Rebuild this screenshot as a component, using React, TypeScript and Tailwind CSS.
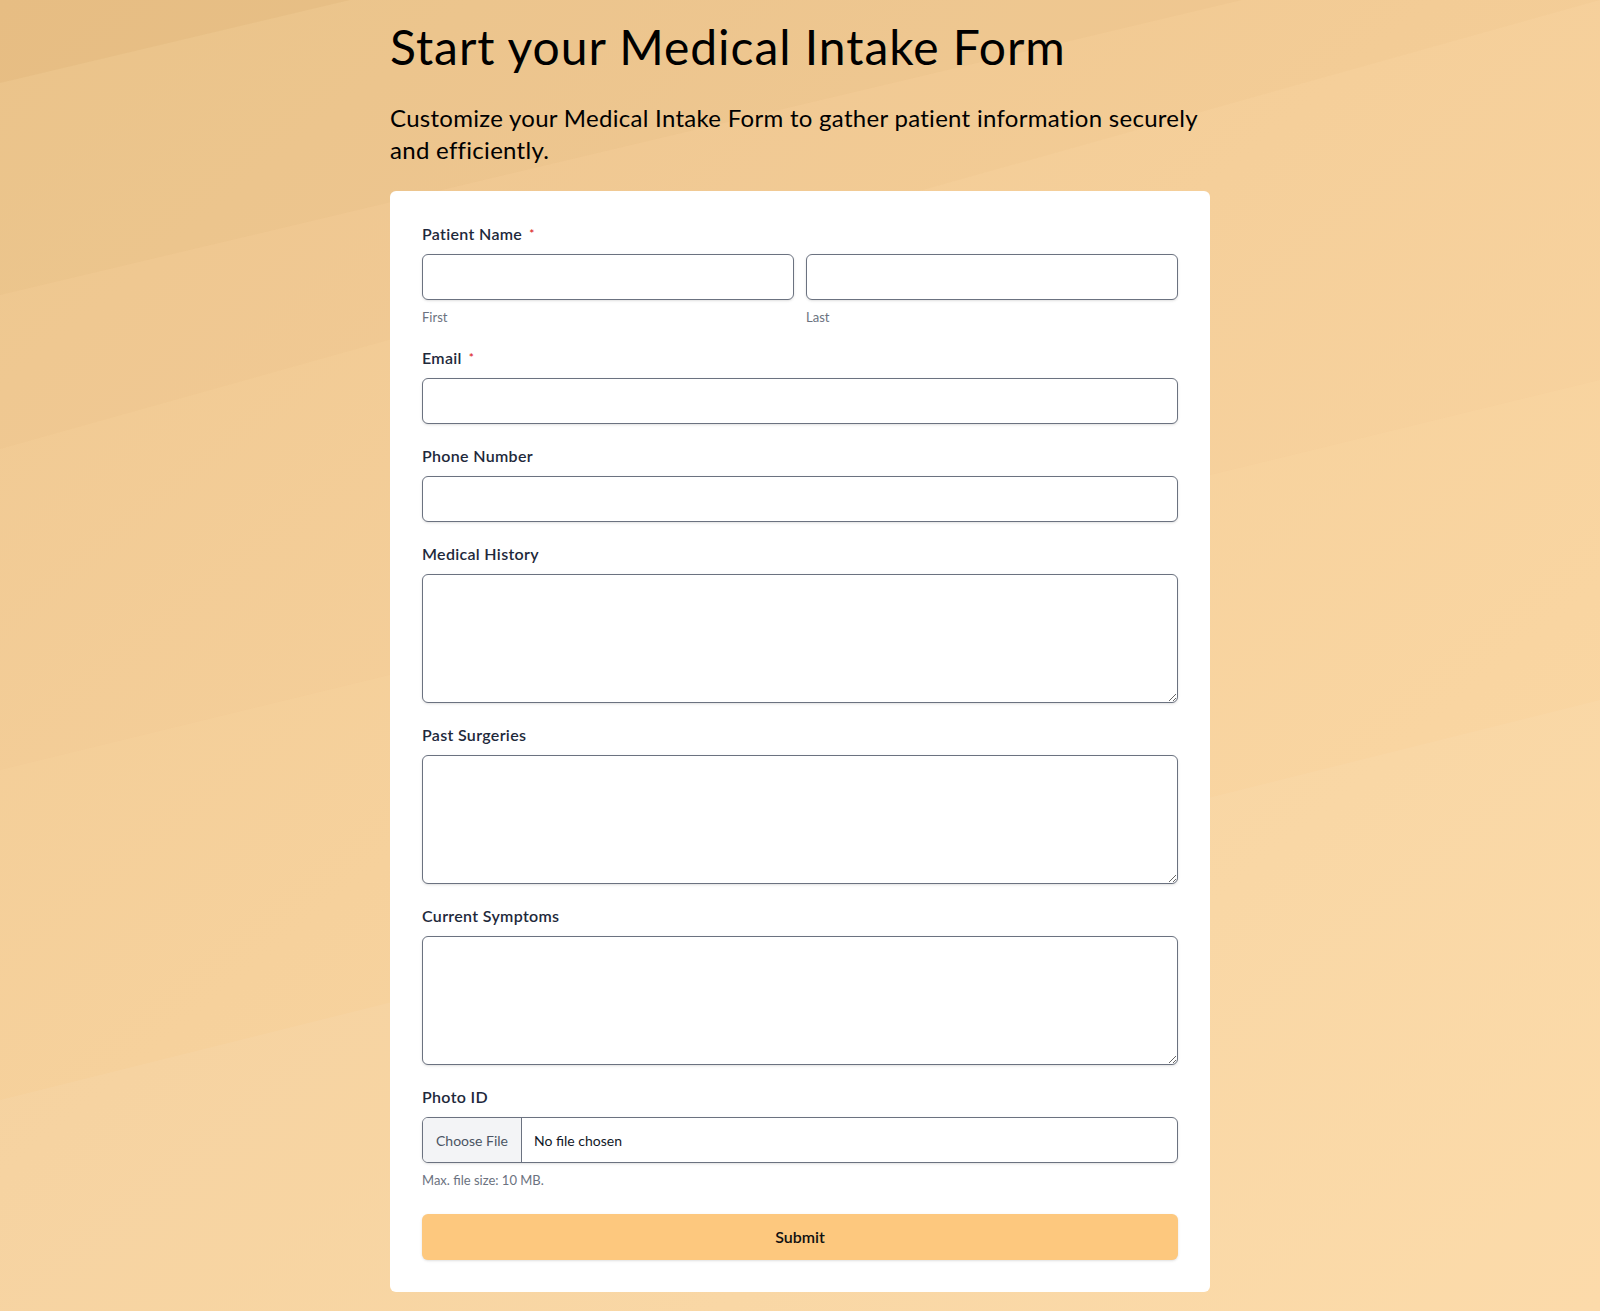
import React from "react";

const font = { fontFamily: "Lato, 'Noto Sans', sans-serif" };

function Label({ text, required }: { text: string; required?: boolean }) {
  return (
    <label className="mb-2 flex items-center text-[16px] font-semibold leading-6 tracking-[0.02em] text-[#1e293b]">
      {text}
      {required && <span className="ml-[7px] text-[12px] text-[#dc2626]">*</span>}
    </label>
  );
}

const inputCls =
  "block h-[46px] w-full rounded-md border border-[#6b7280] bg-white px-3 text-[15px] text-gray-900 shadow-sm outline-none";
const textareaCls =
  "block h-[129px] w-full rounded-md border border-[#6b7280] bg-white px-3 py-2 text-[15px] text-gray-900 shadow-sm outline-none";

function Background() {
  return (
    <svg
      className="absolute inset-0 h-full w-full"
      viewBox="0 0 1600 1311"
      preserveAspectRatio="none"
    >
      <defs>
        <linearGradient id="bg" x1="0" y1="0" x2="1" y2="1">
          <stop offset="0" stopColor="#f0ca93" />
          <stop offset="0.45" stopColor="#f6d19c" />
          <stop offset="1" stopColor="#fcd9a6" />
        </linearGradient>
      </defs>
      <rect width="1600" height="1311" fill="url(#bg)" />
      <polygon points="0,0 1600,0 0,449" fill="#c8914f" opacity="0.04" />
      <polygon points="0,0 1242,0 0,295" fill="#c8914f" opacity="0.06" />
      <polygon points="0,0 350,0 0,83" fill="#c8914f" opacity="0.1" />
      <polygon points="0,0 1600,0 1600,380 0,770" fill="#c8914f" opacity="0.025" />
      <polygon points="0,1311 1600,1311 1600,700 0,1100" fill="#ffffff" opacity="0.05" />
    </svg>
  );
}

export default function App() {
  return (
    <div className="relative min-h-[1311px] w-full overflow-hidden" style={font}>
      <Background />
      <div className="relative mx-auto w-[820px] pt-[19px] pb-[19px]">
        <h1 className="text-[48px] font-normal leading-[56px] tracking-[0.02em] text-black">
          Start your Medical Intake Form
        </h1>
        <p className="mt-[27px] text-[24px] leading-[32px] tracking-[0.012em] text-black">
          Customize your Medical Intake Form to gather patient information securely and
          efficiently.
        </p>

        <form
          className="mt-[25px] rounded-md bg-white px-8 pt-[31px] pb-8"
          onSubmit={(e) => e.preventDefault()}
        >
          <div className="flex flex-col gap-5">
            <div className="pb-px">
              <Label text="Patient Name" required />
              <div className="grid grid-cols-2 gap-3">
                <div>
                  <input className={inputCls} type="text" />
                  <div className="mt-[9px] text-[13px] leading-4 text-[#6b7280]">First</div>
                </div>
                <div>
                  <input className={inputCls} type="text" />
                  <div className="mt-[9px] text-[13px] leading-4 text-[#6b7280]">Last</div>
                </div>
              </div>
            </div>

            <div>
              <Label text="Email" required />
              <input className={inputCls} type="email" />
            </div>

            <div>
              <Label text="Phone Number" />
              <input className={inputCls} type="tel" />
            </div>

            <div>
              <Label text="Medical History" />
              <textarea className={textareaCls} />
            </div>

            <div>
              <Label text="Past Surgeries" />
              <textarea className={textareaCls} />
            </div>

            <div>
              <Label text="Current Symptoms" />
              <textarea className={textareaCls} />
            </div>

            <div>
              <Label text="Photo ID" />
              <div className="flex h-[46px] w-full overflow-hidden rounded-md border border-[#6b7280] bg-white shadow-sm">
                <div className="flex w-[99px] items-center justify-center border-r border-[#6b7280] bg-[#f3f4f6] text-[14px] text-[#4b5563]">
                  Choose File
                </div>
                <div className="flex items-center pl-3 text-[14px] text-[#111827]">
                  No file chosen
                </div>
              </div>
              <div className="mt-[9px] text-[13px] leading-4 text-[#6b7280]">
                Max. file size: 10 MB.
              </div>
            </div>
          </div>

          <button
            type="submit"
            className="mt-[26px] block h-[46px] w-full rounded-md bg-[#fdc87e] text-[16px] font-semibold text-[#111111] shadow-sm"
          >
            Submit
          </button>
        </form>
      </div>
    </div>
  );
}
